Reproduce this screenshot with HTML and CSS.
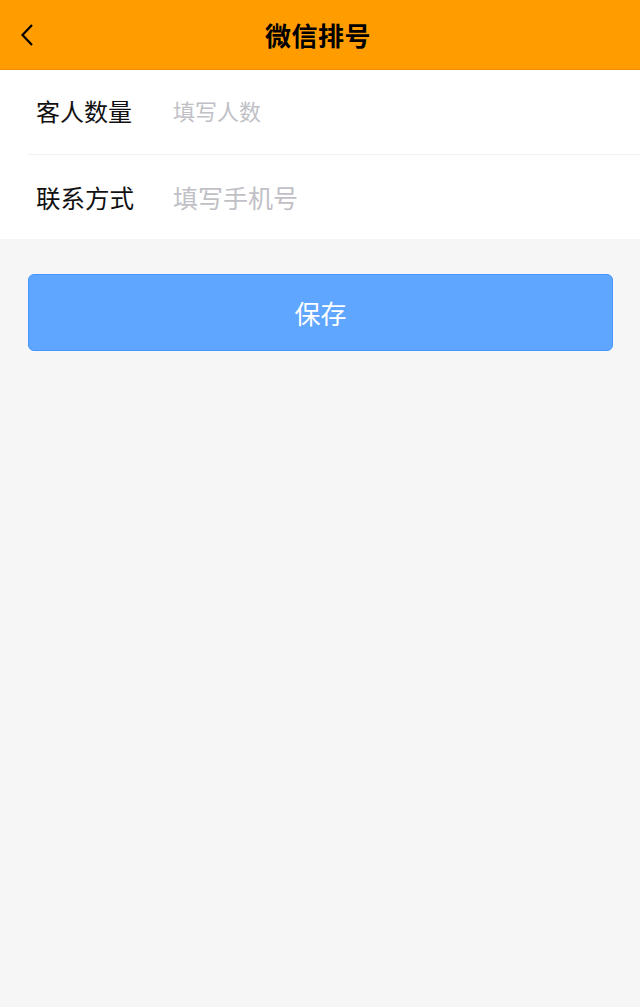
FILE: index.html
```html
<!DOCTYPE html>
<html lang="zh">
<head>
<meta charset="utf-8">
<link rel="stylesheet" href="styles.css">
</head>
<body>
<header class="nav">
  <button class="back" aria-label="返回">
    <svg width="14" height="24" viewBox="0 0 14 24"><path d="M12 2 L2.5 12 L12 22" fill="none" stroke="#000" stroke-width="2.2"/></svg>
  </button>
  <h1 class="title">微信排号</h1>
</header>
<section class="form">
  <div class="row row-first">
    <span class="label">客人数量</span>
    <span class="input input-small">填写人数</span>
  </div>
  <div class="row">
    <span class="label label-large">联系方式</span>
    <span class="input input-large">填写手机号</span>
  </div>
</section>
<div class="actions">
  <button class="save">保存</button>
</div>
</body>
</html>
```
FILE: styles.css
```css
html, body {
  margin: 0;
  padding: 0;
  background: #f6f6f6;
  font-family: "Noto Sans CJK SC", "Noto Sans", sans-serif;
}
.nav {
  height: 69px;
  background: #ff9c00;
  border-bottom: 1px solid #f28f00;
  display: flex;
  align-items: center;
  justify-content: center;
  position: relative;
}
.back {
  position: absolute;
  left: 20px;
  top: 23px;
  border: 0;
  background: none;
  padding: 0;
  display: flex;
}
.title {
  margin: 0 0 0 -4px;
  font-size: 26px;
  font-weight: 700;
  color: #000;
  letter-spacing: 0.5px;
}
.form {
  background: #fff;
}
.row {
  height: 84px;
  margin-left: 28px;
  display: flex;
  align-items: center;
}
.row-first {
  padding-bottom: 4px;
  box-sizing: border-box;
}
.row + .row {
  border-top: 1px solid #f2f2f2;
}
.label {
  width: 144px;
  padding-left: 8px;
  box-sizing: border-box;
  font-size: 24px;
  color: #111;
}
.label-large {
  font-size: 24.5px;
}
.input {
  font-size: 24px;
  color: #c0c0c6;
}
.input-small {
  font-size: 22px;
  padding-left: 1px;
}
.input-large {
  font-size: 25px;
  padding-left: 1px;
}
.actions {
  padding: 35px 27px 0 28px;
}
.save {
  width: 100%;
  height: 77px;
  border: 1px solid #4596ff;
  border-radius: 6px;
  background: #5ea6ff;
  color: #fff;
  font-family: "Noto Sans CJK SC", "Noto Sans", sans-serif;
  font-size: 26px;
  display: block;
}
```
